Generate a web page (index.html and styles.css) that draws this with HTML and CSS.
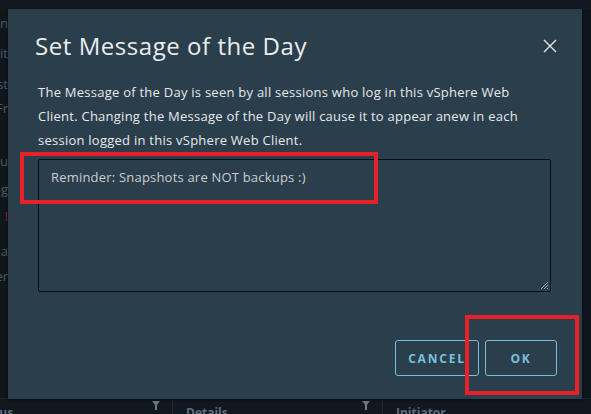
FILE: index.html
```html
<!DOCTYPE html>
<html>
<head>
<meta charset="utf-8">
<link rel="stylesheet" href="styles.css">
</head>
<body>
<div class="page">
  <div class="top-strip"></div>
  <div class="main">
    <div class="side">
      <div class="frag f1">Open</div>
      <div class="frag f2">Edit</div>
      <div class="frag f3">Host</div>
      <div class="frag f4">Fr</div>
      <div class="frag f5">Edu</div>
      <div class="frag f6">Log</div>
      <div class="frag f7 red">!</div>
      <div class="frag f8">Upda</div>
      <div class="frag f9">Ser</div>
    </div>
  </div>
  <div class="table-head">
    <div class="col c1"><span class="hd">Status</span><span class="filter"></span></div>
    <div class="col c2"><span class="hd">Details</span><span class="filter"></span></div>
    <div class="col c3"><span class="hd">Initiator</span></div>
  </div>
</div>

<div class="backdrop">
  <div class="modal">
    <div class="modal-header">
      <h1 class="title">Set Message of the Day</h1>
      <button class="close" aria-label="Close">
        <svg width="14" height="14" viewBox="0 0 14 14"><path d="M1 1 L13 13 M13 1 L1 13" stroke="#e6e6e6" stroke-width="1.4" fill="none"/></svg>
      </button>
    </div>
    <div class="modal-body">
      <p class="desc">The Message of the Day is seen by all sessions who log in this vSphere Web Client. Changing the Message of the Day will cause it to appear anew in each session logged in this vSphere Web Client.</p>
      <div class="textarea">
        <span class="ta-text">Reminder: Snapshots are NOT backups :)</span>
        <svg class="grip" width="9" height="9" viewBox="0 0 9 9"><path d="M8 1 L1 8 M8 4 L4 8 M8 7 L7 8" stroke="#9aa6b0" stroke-width="1" fill="none"/></svg>
      </div>
    </div>
    <div class="modal-footer">
      <button class="btn">CANCEL</button>
      <button class="btn ok">OK</button>
    </div>
  </div>
</div>

<div class="mark m1"></div>
<div class="mark m2"></div>
</body>
</html>
```

FILE: styles.css
```css
html, body {
  margin: 0;
  padding: 0;
  width: 591px;
  height: 414px;
  overflow: hidden;
  background: #0f151a;
  font-family: "Open Sans", "Noto Sans", sans-serif;
}

.page {
  width: 591px;
  height: 414px;
  display: flex;
  flex-direction: column;
  background: #0f151a;
  overflow: hidden;
}

.top-strip {
  height: 9px;
  background: #12181e;
}

.main {
  flex: 1;
  display: flex;
}

.side {
  width: 8px;
  overflow: hidden;
  position: relative;
  background: #10171c;
}

.frag {
  position: absolute;
  right: 0;
  font-size: 13px;
  color: #4b5a68;
  white-space: nowrap;
}
.f1 { top: 5px; }
.f2 { top: 35px; }
.f3 { top: 66px; }
.f4 { top: 90px; }
.f5 { top: 143px; }
.f6 { top: 171px; }
.f7 { top: 198px; color: #8a2a2a; }
.f8 { top: 233px; }
.f9 { top: 258px; }

.table-head {
  height: 15px;
  display: flex;
  background: #111820;
  border-top: 1px solid #1b242c;
  overflow: hidden;
}

.col {
  display: flex;
  align-items: flex-start;
  padding-left: 13px;
  border-right: 1px solid #1e2830;
  position: relative;
  box-sizing: border-box;
}
.c1 { width: 211px; margin-left: -38px; flex: none; }
.c2 { width: 210px; flex: none; }
.c3 { flex: 1; border-right: none; }

.hd {
  font-size: 12px;
  font-weight: 700;
  color: #5d6d7d;
  line-height: 16px;
  padding-top: 6px;
}

.filter {
  position: absolute;
  right: 12px;
  top: 2px;
  width: 0;
  height: 0;
  border-left: 4px solid transparent;
  border-right: 4px solid transparent;
  border-top: 5px solid #6f7c88;
}
.filter::after {
  content: "";
  position: absolute;
  left: -1px;
  top: -1px;
  width: 2px;
  height: 5px;
  background: #6f7c88;
}

.backdrop {
  position: absolute;
  inset: 0;
}

.modal {
  position: absolute;
  left: 8px;
  top: 9px;
  width: 574px;
  height: 390px;
  background: #2b3e4b;
  box-shadow: 0 1px 3px rgba(0,0,0,0.5);
  display: flex;
  flex-direction: column;
  box-sizing: border-box;
  padding: 0 30px 0 30px;
}

.modal-header {
  display: flex;
  align-items: center;
  justify-content: space-between;
  padding-top: 21px;
  height: 31px;
}

.title {
  margin: 0;
  margin-left: -3px;
  font-size: 24px;
  font-weight: 400;
  color: #e9ecee;
  letter-spacing: 0.55px;
}

.close {
  background: none;
  border: none;
  padding: 0;
  margin-right: -5px;
  width: 14px;
  height: 14px;
  display: flex;
}

.modal-body {
  padding-top: 19px;
}

.desc {
  margin: 0;
  font-size: 13px;
  line-height: 24px;
  color: #e6e9eb;
  letter-spacing: 0.25px;
  max-width: 505px;
}

.textarea {
  margin-top: 7px;
  height: 133px;
  width: 513px;
  box-sizing: border-box;
  border: 1px solid #0a0d10;
  border-radius: 2px;
  padding: 5px 12px;
  position: relative;
}

.ta-text {
  font-size: 13px;
  color: #c9ced2;
  line-height: 20px;
  letter-spacing: 0.2px;
}

.grip {
  position: absolute;
  right: 1px;
  bottom: 1px;
}

.modal-footer {
  display: flex;
  justify-content: flex-end;
  gap: 6px;
  margin-top: auto;
  padding-bottom: 23px;
  margin-right: -5px;
}

.btn {
  height: 36px;
  box-sizing: border-box;
  border: 1px solid #79c0dc;
  border-radius: 3px;
  background: transparent;
  color: #79c0dc;
  font-family: "Open Sans", "Noto Sans", sans-serif;
  font-size: 12px;
  font-weight: 700;
  letter-spacing: 1.8px;
  padding: 0 8px;
  width: 84px;
}
.btn.ok { width: 72px; }

.mark {
  position: absolute;
  border: 4px solid #e8202a;
  box-sizing: border-box;
}
.m1 { left: 20px; top: 152px; width: 358px; height: 52px; }
.m2 { left: 465px; top: 315px; width: 114px; height: 80px; }
```
